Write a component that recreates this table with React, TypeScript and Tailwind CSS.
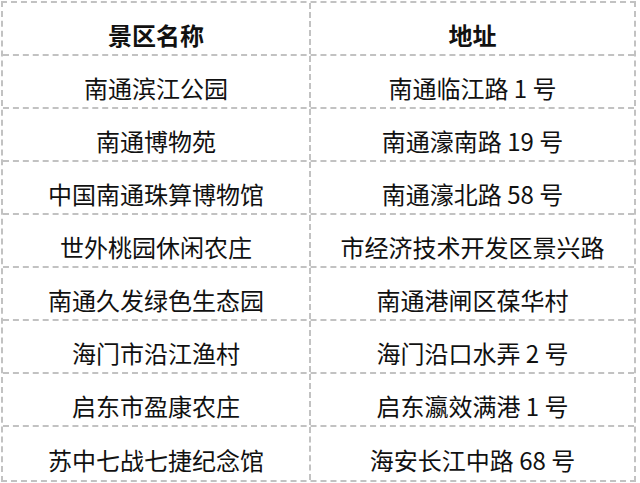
const ROWS: [string, string][] = [
  ["南通滨江公园", "南通临江路 1 号"],
  ["南通博物苑", "南通濠南路 19 号"],
  ["中国南通珠算博物馆", "南通濠北路 58 号"],
  ["世外桃园休闲农庄", "市经济技术开发区景兴路"],
  ["南通久发绿色生态园", "南通港闸区葆华村"],
  ["海门市沿江渔村", "海门沿口水弄 2 号"],
  ["启东市盈康农庄", "启东瀛效满港 1 号"],
  ["苏中七战七捷纪念馆", "海安长江中路 68 号"],
]

function Row({ name, addr, head, last }: { name: string; addr: string; head?: boolean; last?: boolean }) {
  return (
    <div
      className={`grid h-[53px] grid-cols-[308px_1fr] ${last ? "" : "border-b-2 border-dashed border-[#c2c2c2]"}`}
    >
      <div className="flex items-center justify-center border-r-2 border-dashed border-[#c2c2c2] pt-[12px]">
        <span className={head ? "font-bold" : ""}>{name}</span>
      </div>
      <div className="flex items-center justify-center pt-[12px]">
        <span className={head ? "font-bold" : ""}>{addr}</span>
      </div>
    </div>
  )
}

export default function App() {
  return (
    <div className="h-[483px] w-[640px] overflow-hidden bg-white">
      <div
        className="ml-px mt-px w-[635px] border-2 border-dashed border-[#c2c2c2] text-[24px] leading-none text-[#111]"
        style={{ fontFamily: '"Noto Sans CJK SC", "Noto Sans", sans-serif' }}
      >
        <Row name="景区名称" addr="地址" head />
        {ROWS.map(([name, addr], i) => (
          <Row key={name} name={name} addr={addr} last={i === ROWS.length - 1} />
        ))}
      </div>
    </div>
  )
}
